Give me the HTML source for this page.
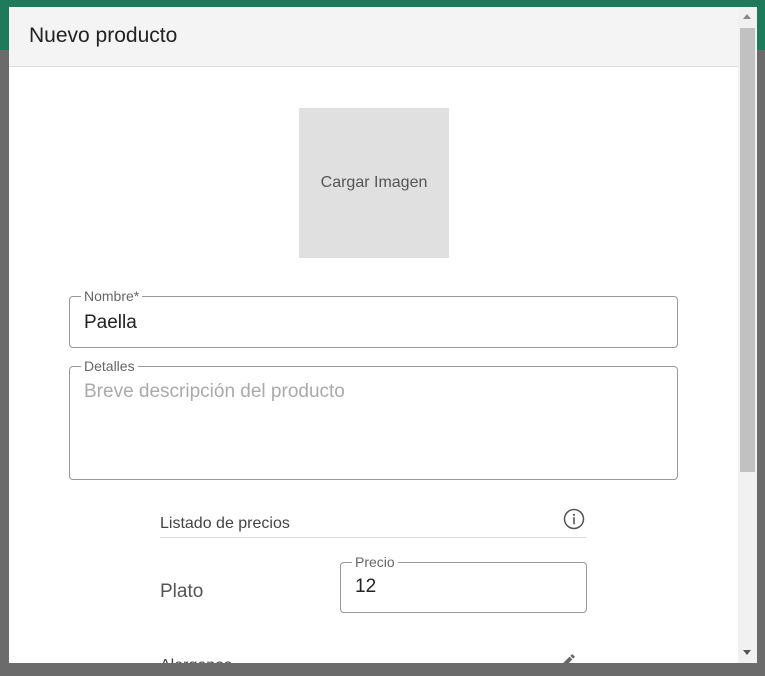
<!DOCTYPE html>
<html><head><style>
*{box-sizing:border-box;margin:0;padding:0}
body{width:765px;height:676px;overflow:hidden;background:#6b6b6b;position:relative;font-family:"Liberation Sans",sans-serif;}
.green{position:absolute;left:0;top:0;width:765px;height:50px;background:#1e7a5a}
.dlg{position:absolute;left:9px;top:7px;width:729px;height:656px;background:#fff;overflow:hidden}
.hdr{height:60px;background:#f4f4f4;border-bottom:1px solid #ddd;padding:17px 20px;font-size:21px;color:#222}
.sb{position:absolute;left:738px;top:7px;width:19px;height:656px;background:#f1f1f1}
.thumb{position:absolute;left:2px;top:21px;width:15px;height:444px;background:#c1c1c1}
.abs{position:absolute}
fieldset{position:absolute;border:1px solid #999;border-radius:4px;padding:0 14px}
legend{font-size:14px;color:#666;padding:0 3px;margin-left:-3px;line-height:10px}
.val{font-size:19px;color:#222}
</style></head><body>
<div class="green"></div>
<div class="dlg">
<div class="hdr">Nuevo producto</div>
<div class="abs" style="left:290px;top:101px;width:150px;height:150px;background:#e0e0e0;color:#555;font-size:16px;text-align:center;line-height:150px">Cargar Imagen</div>
<fieldset style="left:60px;top:284px;width:609px;height:57px"><legend>Nombre*</legend><div class="val" style="margin-top:11px">Paella</div></fieldset>
<fieldset style="left:60px;top:354px;width:609px;height:119px"><legend>Detalles</legend><div class="val" style="margin-top:10px;color:#aaa">Breve descripción del producto</div></fieldset>
<div class="abs" style="left:151px;top:508px;font-size:16px;color:#444">Listado de precios</div>
<div class="abs" style="left:151px;top:530px;width:426px;height:1px;background:#ddd"></div>
<svg class="abs" style="left:554px;top:501px" width="22" height="22" viewBox="0 0 22 22"><circle cx="11" cy="11" r="9.5" fill="none" stroke="#555" stroke-width="1.5"/><circle cx="11" cy="6.8" r="1.1" fill="#555"/><rect x="10.2" y="9.2" width="1.6" height="7" fill="#555"/></svg>
<div class="abs" style="left:151px;top:574px;font-size:19px;color:#555">Plato</div>
<fieldset style="left:331px;top:550px;width:247px;height:56px"><legend>Precio</legend><div class="val" style="margin-top:9px">12</div></fieldset>
<div class="abs" style="left:151px;top:650px;font-size:16px;color:#444">Alergenos</div>
<svg class="abs" style="left:550px;top:645px" width="18" height="18" viewBox="0 0 24 24"><path d="M3 17.25V21h3.75L17.810 9.94l-3.75-3.750L3 17.25zM20.71 7.04a1 1 0 000-1.41l-2.34-2.34a1 1 0 00-1.41 0l-1.83 1.83 3.75 3.75 1.83-1.83z" fill="#666"/></svg>
</div>
<div class="sb"><div class="thumb"></div>
<div class="abs" style="left:5px;top:7px;border:4px solid transparent;border-bottom:5px solid #888;border-top:0"></div>
<div class="abs" style="left:5px;top:643px;border:4px solid transparent;border-top:5px solid #555;border-bottom:0"></div></div>
</body></html>
